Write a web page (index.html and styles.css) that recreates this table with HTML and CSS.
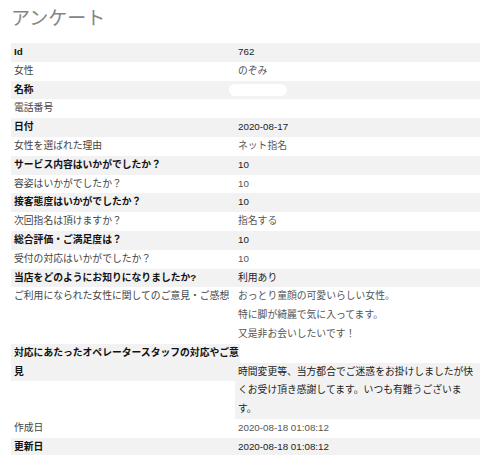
FILE: index.html
```html
<!DOCTYPE html>
<html lang="ja">
<head>
<meta charset="utf-8">
<title>アンケート</title>
<link rel="stylesheet" href="styles.css">
</head>
<body>
<h1 class="title">アンケート</h1>
<div class="sheet">
  <div class="row odd"><div class="label">Id</div><div class="value">762</div></div>
  <div class="row"><div class="label">女性</div><div class="value">のぞみ</div></div>
  <div class="row odd"><div class="label">名称</div><div class="value"><span class="mask"></span></div></div>
  <div class="row"><div class="label">電話番号</div><div class="value"></div></div>
  <div class="row odd"><div class="label">日付</div><div class="value">2020-08-17</div></div>
  <div class="row"><div class="label">女性を選ばれた理由</div><div class="value">ネット指名</div></div>
  <div class="row odd"><div class="label">サービス内容はいかがでしたか？</div><div class="value">10</div></div>
  <div class="row"><div class="label">容姿はいかがでしたか？</div><div class="value">10</div></div>
  <div class="row odd"><div class="label">接客態度はいかがでしたか？</div><div class="value">10</div></div>
  <div class="row"><div class="label">次回指名は頂けますか？</div><div class="value">指名する</div></div>
  <div class="row odd"><div class="label">総合評価・ご満足度は？</div><div class="value">10</div></div>
  <div class="row"><div class="label">受付の対応はいかがでしたか？</div><div class="value">10</div></div>
  <div class="row odd"><div class="label">当店をどのようにお知りになりましたか?</div><div class="value">利用あり</div></div>
  <div class="row"><div class="label">ご利用になられた女性に関してのご意見・ご感想</div><div class="value">おっとり童顔の可愛いらしい女性。<br>特に脚が綺麗で気に入ってます。<br>又是非お会いしたいです！</div></div>
  <div class="row odd wide"><div class="label">対応にあたったオペレータースタッフの対応やご意見</div><div class="value">時間変更等、当方都合でご迷惑をお掛けしましたが快くお受け頂き感謝してます。いつも有難うございます。</div></div>
  <div class="row"><div class="label">作成日</div><div class="value">2020-08-18 01:08:12</div></div>
  <div class="row odd"><div class="label">更新日</div><div class="value">2020-08-18 01:08:12</div></div>
</div>
</body>
</html>
```
FILE: styles.css
```css
html, body {
  margin: 0;
  padding: 0;
  background: #ffffff;
  overflow: hidden;
}
body {
  font-family: "Liberation Sans", "Noto Sans CJK JP", sans-serif;
}
.title {
  margin: 0 0 12px 0;
  padding: 7px 0 0 11px;
  font-size: 19px;
  line-height: 24px;
  font-weight: normal;
  color: #858585;
}
.sheet {
  margin-left: 11px;
  width: 469px;
  font-size: 9.8px;
  line-height: 18.8px;
}
.row {
  display: grid;
  grid-template-columns: 224px 1fr;
  color: #555555;
}
.row .label {
  padding-left: 3px;
  color: #444444;
  white-space: normal;
}
.row .value {
  padding-left: 3px;
}
.row.odd .label,
.row.odd .value {
  background: #f2f2f2;
}
.row.odd .label {
  font-weight: bold;
  color: #111111;
}
.row.odd .value {
  color: #222222;
}
.row.wide {
  grid-template-rows: 18.8px auto;
}
.row.wide .label {
  grid-column: 1;
  grid-row: 1 / 3;
  width: 226px;
  align-self: start;
}
.row.wide .value {
  grid-column: 2;
  grid-row: 2;
}
.mask {
  display: inline-block;
  width: 58px;
  height: 12px;
  margin-left: -9px;
  border-radius: 6px;
  background: #ffffff;
  vertical-align: middle;
}
```
